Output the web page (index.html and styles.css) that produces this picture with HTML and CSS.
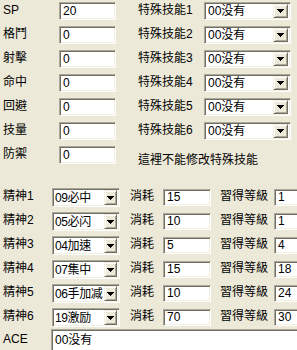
FILE: index.html
```html
<!DOCTYPE html>
<html>
<head>
<meta charset="utf-8">
<link rel="stylesheet" href="styles.css">
</head>
<body>
<div class="top">
  <div class="lbl">SP</div><div class="edit">20</div><div class="lbl r">特殊技能1</div><div class="combo"><span>00没有</span><i class="btn"><svg width="7" height="4" viewBox="0 0 7 4"><path d="M0 0h7v1H0zM1 1h5v1H1zM2 2h3v1H2zM3 3h1v1H3z"/></svg></i></div>
  <div class="lbl">格鬥</div><div class="edit">0</div><div class="lbl r">特殊技能2</div><div class="combo"><span>00没有</span><i class="btn"><svg width="7" height="4" viewBox="0 0 7 4"><path d="M0 0h7v1H0zM1 1h5v1H1zM2 2h3v1H2zM3 3h1v1H3z"/></svg></i></div>
  <div class="lbl">射擊</div><div class="edit">0</div><div class="lbl r">特殊技能3</div><div class="combo"><span>00没有</span><i class="btn"><svg width="7" height="4" viewBox="0 0 7 4"><path d="M0 0h7v1H0zM1 1h5v1H1zM2 2h3v1H2zM3 3h1v1H3z"/></svg></i></div>
  <div class="lbl">命中</div><div class="edit">0</div><div class="lbl r">特殊技能4</div><div class="combo"><span>00没有</span><i class="btn"><svg width="7" height="4" viewBox="0 0 7 4"><path d="M0 0h7v1H0zM1 1h5v1H1zM2 2h3v1H2zM3 3h1v1H3z"/></svg></i></div>
  <div class="lbl">回避</div><div class="edit">0</div><div class="lbl r">特殊技能5</div><div class="combo"><span>00没有</span><i class="btn"><svg width="7" height="4" viewBox="0 0 7 4"><path d="M0 0h7v1H0zM1 1h5v1H1zM2 2h3v1H2zM3 3h1v1H3z"/></svg></i></div>
  <div class="lbl">技量</div><div class="edit">0</div><div class="lbl r">特殊技能6</div><div class="combo"><span>00没有</span><i class="btn"><svg width="7" height="4" viewBox="0 0 7 4"><path d="M0 0h7v1H0zM1 1h5v1H1zM2 2h3v1H2zM3 3h1v1H3z"/></svg></i></div>
  <div class="lbl">防禦</div><div class="edit">0</div><div class="note">這裡不能修改特殊技能</div>
</div>
<div class="spirit">
  <div class="lbl">精神1</div><div class="combo sm"><span>09必中</span><i class="btn"><svg width="7" height="4" viewBox="0 0 7 4"><path d="M0 0h7v1H0zM1 1h5v1H1zM2 2h3v1H2zM3 3h1v1H3z"/></svg></i></div><div class="lbl s">消耗</div><div class="edit">15</div><div class="lbl s2">習得等級</div><div class="edit">1</div>
  <div class="lbl">精神2</div><div class="combo sm"><span>05必闪</span><i class="btn"><svg width="7" height="4" viewBox="0 0 7 4"><path d="M0 0h7v1H0zM1 1h5v1H1zM2 2h3v1H2zM3 3h1v1H3z"/></svg></i></div><div class="lbl s">消耗</div><div class="edit">10</div><div class="lbl s2">習得等級</div><div class="edit">1</div>
  <div class="lbl">精神3</div><div class="combo sm"><span>04加速</span><i class="btn"><svg width="7" height="4" viewBox="0 0 7 4"><path d="M0 0h7v1H0zM1 1h5v1H1zM2 2h3v1H2zM3 3h1v1H3z"/></svg></i></div><div class="lbl s">消耗</div><div class="edit">5</div><div class="lbl s2">習得等級</div><div class="edit">4</div>
  <div class="lbl">精神4</div><div class="combo sm"><span>07集中</span><i class="btn"><svg width="7" height="4" viewBox="0 0 7 4"><path d="M0 0h7v1H0zM1 1h5v1H1zM2 2h3v1H2zM3 3h1v1H3z"/></svg></i></div><div class="lbl s">消耗</div><div class="edit">15</div><div class="lbl s2">習得等級</div><div class="edit">18</div>
  <div class="lbl">精神5</div><div class="combo sm"><span>06手加减</span><i class="btn"><svg width="7" height="4" viewBox="0 0 7 4"><path d="M0 0h7v1H0zM1 1h5v1H1zM2 2h3v1H2zM3 3h1v1H3z"/></svg></i></div><div class="lbl s">消耗</div><div class="edit">10</div><div class="lbl s2">習得等級</div><div class="edit">24</div>
  <div class="lbl">精神6</div><div class="combo sm"><span>19激励</span><i class="btn"><svg width="7" height="4" viewBox="0 0 7 4"><path d="M0 0h7v1H0zM1 1h5v1H1zM2 2h3v1H2zM3 3h1v1H3z"/></svg></i></div><div class="lbl s">消耗</div><div class="edit">70</div><div class="lbl s2">習得等級</div><div class="edit">30</div>
</div>
<div class="ace">
  <div class="lbl">ACE</div><div class="edit wide">00没有</div>
</div>
</body>
</html>
```
FILE: styles.css
```css
html, body {
  margin: 0;
  padding: 0;
  background: #ECE9D8;
  overflow: hidden;
  width: 297px;
  height: 350px;
}
body {
  font-family: "Liberation Sans", "Noto Sans CJK TC", sans-serif;
  font-size: 12px;
  color: #000;
}
.top {
  display: grid;
  grid-template-columns: 56px 57px 88px 87px;
  grid-auto-rows: 18px;
  row-gap: 6px;
  padding: 2px 0 0 3px;
}
.lbl {
  line-height: 14px;
  padding-top: 1px;
  white-space: nowrap;
}
.lbl.r { padding-left: 22px; }
.note {
  grid-column: 3 / 5;
  padding-left: 22px;
  padding-top: 7px;
  line-height: 14px;
  white-space: nowrap;
}
.edit, .combo {
  box-sizing: border-box;
  background: #fff;
  border: 1px solid;
  border-color: #ACA899 #fff #fff #ACA899;
  box-shadow: inset 1px 1px 0 #716F64, inset -1px -1px 0 #F1EFE2;
  height: 18px;
  line-height: 16px;
  padding-left: 3px;
  white-space: nowrap;
  overflow: hidden;
}
.combo {
  display: flex;
  align-items: center;
  padding: 0 2px 0 3px;
}
.combo span { flex: 1; line-height: 16px; overflow: hidden; }
.btn {
  box-sizing: border-box;
  width: 15px;
  height: 14px;
  background: #ECE9D8;
  border: 1px solid;
  border-color: #F1EFE2 #716F64 #716F64 #F1EFE2;
  box-shadow: inset 1px 1px 0 #fff, inset -1px -1px 0 #ACA899;
  display: flex;
  align-items: center;
  justify-content: center;
  flex: none;
}
.btn svg { display: block; }
.spirit {
  display: grid;
  grid-template-columns: 49px 68px 43px 48px 63px 40px;
  grid-auto-rows: 19px;
  row-gap: 5px;
  padding: 24px 0 0 3px;
}
.combo.sm { height: 19px; padding-left: 2px; }
.combo.sm span { letter-spacing: -0.4px; }
.combo.sm .btn { width: 13px; height: 15px; }
.spirit .edit { height: 17px; line-height: 15px; align-self: center; }
.lbl.s { padding-left: 10px; }
.lbl.s2 { padding-left: 9px; }
.ace {
  display: grid;
  grid-template-columns: 48px 260px;
  padding: 2px 0 0 3px;
}
.edit.wide { height: 24px; line-height: 20px; }
.ace .lbl { padding-top: 3px; }
```
